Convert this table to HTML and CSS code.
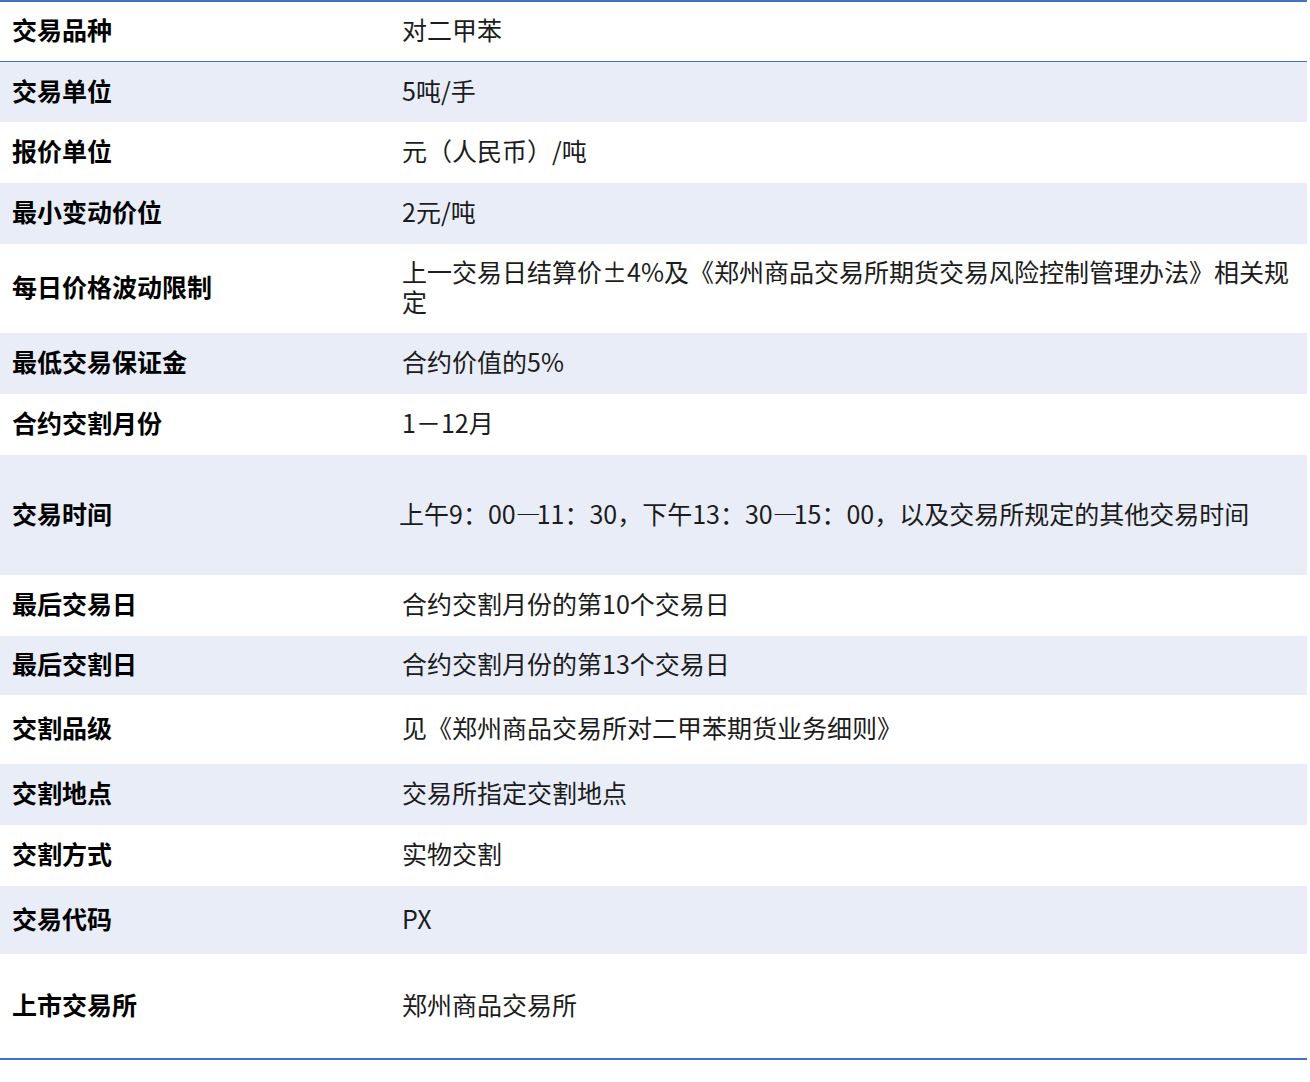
FILE: index.html
```html
<!DOCTYPE html>
<html lang="zh-CN">
<head>
<meta charset="utf-8">
<title>对二甲苯期货合约</title>
<link rel="stylesheet" href="styles.css">
</head>
<body>
<div class="spec">
  <div class="row head h60"><div class="key">交易品种</div><div class="val">对二甲苯</div></div>
  <div class="row alt h60"><div class="key">交易单位</div><div class="val">5吨/手</div></div>
  <div class="row h61"><div class="key">报价单位</div><div class="val">元（人民币）/吨</div></div>
  <div class="row alt h61"><div class="key">最小变动价位</div><div class="val">2元/吨</div></div>
  <div class="row h89"><div class="key">每日价格波动限制</div><div class="val">上一交易日结算价±4%及《郑州商品交易所期货交易风险控制管理办法》相关规定</div></div>
  <div class="row alt h61"><div class="key">最低交易保证金</div><div class="val">合约价值的5%</div></div>
  <div class="row h61"><div class="key">合约交割月份</div><div class="val">1－12月</div></div>
  <div class="row alt h120"><div class="key">交易时间</div><div class="val shift">上午9：00<span class="dash">—</span>11：30，下午13：30<span class="dash">—</span>15：00，以及交易所规定的其他交易时间</div></div>
  <div class="row h61"><div class="key">最后交易日</div><div class="val">合约交割月份的第10个交易日</div></div>
  <div class="row alt h59"><div class="key">最后交割日</div><div class="val">合约交割月份的第13个交易日</div></div>
  <div class="row h69"><div class="key">交割品级</div><div class="val">见《郑州商品交易所对二甲苯期货业务细则》</div></div>
  <div class="row alt h61"><div class="key">交割地点</div><div class="val">交易所指定交割地点</div></div>
  <div class="row h61"><div class="key">交割方式</div><div class="val">实物交割</div></div>
  <div class="row alt h68"><div class="key">交易代码</div><div class="val">PX</div></div>
  <div class="row h104"><div class="key">上市交易所</div><div class="val">郑州商品交易所</div></div>
</div>
</body>
</html>
```
FILE: styles.css
```css
html, body {
  margin: 0;
  padding: 0;
  background: #ffffff;
}
body {
  font-family: "Noto Sans CJK SC", "Noto Sans", sans-serif;
  font-size: 25px;
  line-height: 30px;
  color: #1c1c1c;
}
.spec {
  width: 1307px;
  border-top: 2px solid #4472c4;
  border-bottom: 2px solid #4472c4;
}
.row {
  box-sizing: border-box;
  display: flex;
  align-items: center;
  padding-bottom: 5px;
  background: #ffffff;
}
.row.alt {
  background: #e9edf8;
}
.row.head {
  border-bottom: 1px solid #4472c4;
}
.key {
  width: 378px;
  flex: none;
  padding-left: 12px;
  font-weight: 700;
  color: #000000;
}
.val {
  flex: 1;
  min-width: 0;
  padding: 0 12px 0 12px;
}
.val.shift {
  margin-left: -3px;
}
.dash {
  letter-spacing: -4px;
}
.h59 { height: 59px; }
.h60 { height: 60px; }
.h61 { height: 61px; }
.h68 { height: 68px; }
.h69 { height: 69px; }
.h89 { height: 89px; }
.h104 { height: 104px; }
.h120 { height: 120px; }
```
